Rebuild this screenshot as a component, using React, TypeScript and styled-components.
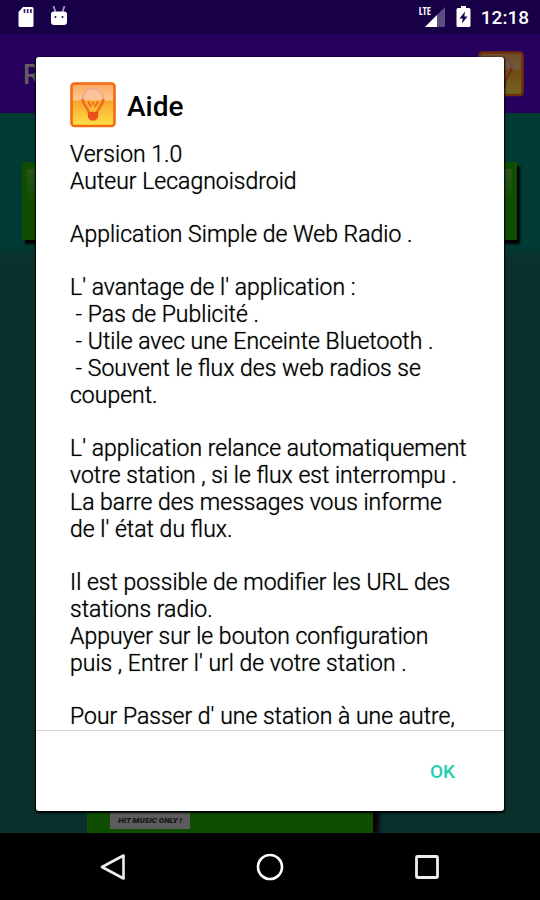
import React from "react";
import styled, { createGlobalStyle } from "styled-components";

const GlobalStyle = createGlobalStyle`
  *, *::before, *::after { box-sizing: border-box; }
  body {
    margin: 0;
    background: #000;
    font-family: Roboto, "Liberation Sans", sans-serif;
  }
  button { font: inherit; border: 0; padding: 0; background: none; cursor: pointer; }
`;

const Screen = styled.div`
  position: relative;
  display: flex;
  flex-direction: column;
  height: 100vh;
  overflow: hidden;
`;

const StatusBar = styled.header`
  display: flex;
  flex: none;
  align-items: center;
  justify-content: space-between;
  height: 34px;
  padding: 0 11px 0 16px;
  background: #170046;
  color: #fff;
`;

const StatusGroup = styled.div<{ $gap: number }>`
  display: flex;
  align-items: center;
  gap: ${(p) => p.$gap}px;
`;

const Clock = styled.time`
  font-size: 19px;
  line-height: 34px;
  font-weight: 500;
  padding-top: 2px;
`;

const AppBar = styled.div`
  display: flex;
  flex: none;
  align-items: center;
  justify-content: space-between;
  height: 79px;
  padding: 0 16px 0 23px;
  background: #25005f;
`;

const AppTitle = styled.h1`
  margin: 0;
  padding-top: 3px;
  font-size: 27px;
  line-height: 32px;
  font-weight: 500;
  color: #665c60;
`;

const DimmedIcon = styled.span`
  display: flex;
  filter: brightness(0.45);
`;

const Content = styled.main`
  display: flex;
  flex: 1;
  flex-direction: column;
  justify-content: space-between;
  min-height: 0;
  background: linear-gradient(#003c34 0, #003b35 130px, #0c302d 146px, #0a302c 100%);
`;

const StationPanel = styled.div`
  margin: 49px 23px 0 22px;
  height: 78px;
  padding: 7px 5px;
  background: #0f4d00;
  box-shadow: 3px 4px 2px #000;
`;

const PanelSheen = styled.div`
  height: 32px;
  background: linear-gradient(#29541d, #0f4d00);
`;

const StationCard = styled.div`
  display: flex;
  align-items: flex-end;
  width: 53%;
  height: 78px;
  margin-left: 87px;
  padding: 0 23px 4px;
  background: #0f4d00;
  box-shadow: 6px 0 4px #0b0004;
`;

const StationLogo = styled.div`
  width: 80px;
  height: 60px;
  display: flex;
  align-items: flex-end;
  justify-content: center;
  background: #5c5c5c;
  color: #141414;
  font: italic 900 8px/17px Roboto, "Liberation Sans", sans-serif;
  white-space: nowrap;
`;

const NavBar = styled.nav`
  display: flex;
  flex: none;
  align-items: center;
  justify-content: center;
  gap: 125px;
  height: 67px;
  background: #000;
`;

const NavButton = styled.button`
  display: flex;
  width: 32px;
  height: 32px;
`;

const Overlay = styled.div`
  position: absolute;
  inset: 34px 0 67px;
  display: flex;
  padding: 23px 36px 22px;
`;

const Dialog = styled.section`
  display: flex;
  flex: 1;
  flex-direction: column;
  min-width: 0;
  border-radius: 3px;
  background: #fff;
  color: #000;
  box-shadow: 0 1px 2px 1px #000;
`;

const DialogHeader = styled.header`
  display: flex;
  flex: none;
  align-items: center;
  gap: 11px;
  padding: 25px 34px 0;
`;

const DialogTitle = styled.h2`
  margin: 0;
  padding-top: 3px;
  font-size: 28px;
  line-height: 43px;
  font-weight: 500;
`;

const DialogBody = styled.div`
  display: flex;
  flex: 1;
  flex-direction: column;
  gap: 26px;
  min-height: 0;
  overflow: hidden;
  padding: 13px 20px 0 34px;
`;

const Paragraph = styled.p`
  flex: none;
  margin: 0;
  font-size: 23px;
  line-height: 27px;
  font-weight: 300;
  text-shadow: 0 0 1px rgba(0, 0, 0, 0.7);
  white-space: pre;
`;

const DialogActions = styled.footer`
  display: flex;
  flex: none;
  justify-content: flex-end;
  align-items: center;
  height: 81px;
  padding: 2px 33px 0;
  border-top: 1px solid #d4d4d4;
`;

const ActionButton = styled.button`
  padding: 8px 16px;
  color: #1fceb4;
  font-size: 19px;
  line-height: 24px;
  font-weight: 500;
`;

const BulbIcon = ({ id }: { id: string }) => (
  <svg width="46" height="46" viewBox="0 0 46 46" aria-hidden="true">
    <defs>
      <linearGradient id={id} x1="0" y1="0" x2="0" y2="1">
        <stop offset="0" stopColor="#fca85e" />
        <stop offset=".38" stopColor="#fdc88c" />
        <stop offset=".42" stopColor="#fba52c" />
        <stop offset="1" stopColor="#ffe04a" />
      </linearGradient>
    </defs>
    <rect x="1.5" y="1.5" width="43" height="42.500" rx="3" fill={`url(#${id})`} stroke="#f26a12" strokeWidth="2.600" />
    <path d="M12.600 17a10.400 10.400 0 0 1 20.800 0" fill="#fbc39a" stroke="#f0a994" strokeWidth="1.800" />
    <path d="M12.600 17c0 6 5.600 8.500 6.400 14h8c.8-5.500 6.400-8 6.400-14" fill="none" stroke="#ee6f22" strokeWidth="2.600" />
    <path d="M18.500 19c0 3 1.500 3.500 2.500 6M27.500 19c0 3-1.500 3.500-2.500 6M23 20v3" fill="none" stroke="#ee6a20" strokeWidth="1.800" />
    <path d="M18 30h10v5.500l-2.500 3h-5l-2.500-3z" fill="#e8501c" />
  </svg>
);

const SdCardIcon = () => (
  <svg width="20" height="22" viewBox="0 0 20 22" aria-hidden="true">
    <path d="M7 1h9a1.500 1.500 0 0 1 1.500 1.500v17a1.500 1.500 0 0 1-1.500 1.500H4a1.500 1.500 0 0 1-1.500-1.500V6z" fill="#fff" />
    <path d="M8.500 3v4M11.700 3v4M14.900 3v4" stroke="#3a2763" strokeWidth="1.700" />
  </svg>
);

const RobotIcon = () => (
  <svg width="18" height="22" viewBox="0 0 18 22" aria-hidden="true">
    <path d="M3.500 0l2 6M14.500 0l-2 6" stroke="#a99bc8" strokeWidth="1.700" />
    <path d="M1 8q0-2.500 3-2.500h10q3 0 3 2.500v8q0 3-3 3H4q-3 0-3-3z" fill="#fff" />
    <circle cx="5.500" cy="11" r="1" fill="#170046" />
    <circle cx="12.500" cy="11" r="1" fill="#170046" />
  </svg>
);

const SignalGroup = styled.div`
  position: relative;
  display: flex;
  width: 27px;
  height: 22px;
`;

const NetworkLabel = styled.span`
  position: absolute;
  left: 0;
  top: 0;
  font: 700 10px/11px "Open Sans Condensed", Roboto, sans-serif;
`;

const SignalIcon = () => (
  <svg width="27" height="22" viewBox="0 0 27 22" aria-hidden="true">
    <path d="M26 1v20H6z" fill="#5d4c83" />
    <path d="M18 9v12H6z" fill="#fff" />
  </svg>
);

const BatteryIcon = () => (
  <svg width="15" height="22" viewBox="0 0 15 22" aria-hidden="true">
    <path d="M5 0h5v2h3q1.500 0 1.500 1.500v16q0 1.500-1.500 1.500H2Q.5 21 .5 19.500v-16Q.5 2 2 2h3z" fill="#fff" />
    <path d="M9 5.500L3.500 12.500h3.200L6 17.500l5.500-7H8.300z" fill="#170046" />
  </svg>
);

const helpText = [
  "Version 1.0\nAuteur Lecagnoisdroid",
  "Application Simple de Web Radio .",
  "L' avantage de l' application :\n - Pas de Publicité .\n - Utile avec une Enceinte Bluetooth .\n - Souvent le flux des web radios se\ncoupent.",
  "L' application relance automatiquement\nvotre station , si le flux est interrompu .\nLa barre des messages vous informe\nde l' état du flux.",
  "Il est possible de modifier les URL des\nstations radio.\nAppuyer sur le bouton configuration\npuis , Entrer l' url de votre station .",
  "Pour Passer d' une station à une autre,",
];

export default function App() {
  return (
    <Screen>
      <GlobalStyle />
      <StatusBar>
        <StatusGroup $gap={14}>
          <SdCardIcon />
          <RobotIcon />
        </StatusGroup>
        <StatusGroup $gap={10}>
          <SignalGroup>
            <SignalIcon />
            <NetworkLabel>LTE</NetworkLabel>
          </SignalGroup>
          <BatteryIcon />
          <Clock>12:18</Clock>
        </StatusGroup>
      </StatusBar>
      <AppBar>
        <AppTitle>R</AppTitle>
        <DimmedIcon>
          <BulbIcon id="bar-bulb" />
        </DimmedIcon>
      </AppBar>
      <Content>
        <StationPanel>
          <PanelSheen />
        </StationPanel>
        <StationCard>
          <StationLogo>HIT MUSIC ONLY !</StationLogo>
        </StationCard>
      </Content>
      <NavBar>
        <NavButton aria-label="Retour">
          <svg width="32" height="32" viewBox="0 0 32 32">
            <path d="M26.500 4.500v23L5 16z" fill="none" stroke="#eee" strokeWidth="2.600" strokeLinejoin="round" />
          </svg>
        </NavButton>
        <NavButton aria-label="Accueil">
          <svg width="32" height="32" viewBox="0 0 32 32">
            <circle cx="16" cy="16" r="12" fill="none" stroke="#fff" strokeWidth="2.600" />
          </svg>
        </NavButton>
        <NavButton aria-label="Applications récentes">
          <svg width="32" height="32" viewBox="0 0 32 32">
            <rect x="5.500" y="5.500" width="21" height="21" rx="1" fill="none" stroke="#eee" strokeWidth="2.800" />
          </svg>
        </NavButton>
      </NavBar>
      <Overlay>
        <Dialog role="dialog" aria-modal="true" aria-labelledby="help-title">
          <DialogHeader>
            <BulbIcon id="help-bulb" />
            <DialogTitle id="help-title">Aide</DialogTitle>
          </DialogHeader>
          <DialogBody>
            {helpText.map((text) => (
              <Paragraph key={text}>{text}</Paragraph>
            ))}
          </DialogBody>
          <DialogActions>
            <ActionButton>OK</ActionButton>
          </DialogActions>
        </Dialog>
      </Overlay>
    </Screen>
  );
}
